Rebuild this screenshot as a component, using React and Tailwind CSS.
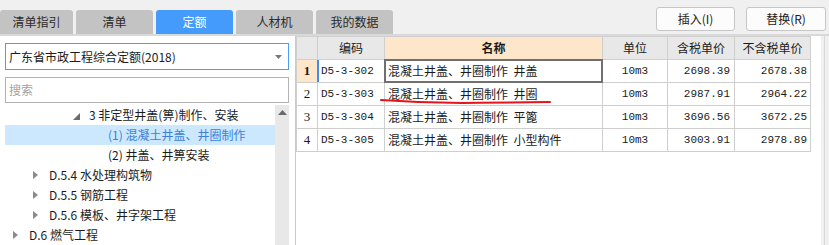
import React from 'react';

const cjk = '"Noto Sans CJK SC", "Noto Sans", sans-serif';
const mono = '"Liberation Mono", "Noto Sans CJK SC", monospace';

const tabs = [
  { label: '清单指引', w: 'w-[73px]' },
  { label: '清单', w: 'w-[77px]' },
  { label: '定额', w: 'w-[77px]', active: true },
  { label: '人材机', w: 'w-[77px]' },
  { label: '我的数据', w: 'w-[77px]' },
];

const rows = [
  { no: 1, code: 'D5-3-302', name: '混凝土井盖、井圈制作  井盖', unit: '10m3', tax: '2698.39', noTax: '2678.38' },
  { no: 2, code: 'D5-3-303', name: '混凝土井盖、井圈制作  井圈', unit: '10m3', tax: '2987.91', noTax: '2964.22' },
  { no: 3, code: 'D5-3-304', name: '混凝土井盖、井圈制作  平篦', unit: '10m3', tax: '3696.56', noTax: '3672.25' },
  { no: 4, code: 'D5-3-305', name: '混凝土井盖、井圈制作  小型构件', unit: '10m3', tax: '3003.91', noTax: '2978.89' },
];

const tree = [
  { text: '3 非定型井盖(箅)制作、安装', pad: 'pl-[68px]', icon: 'open' },
  { text: '(1) 混凝土井盖、井圈制作', pad: 'pl-[103px]', selected: true },
  { text: '(2) 井盖、井箅安装', pad: 'pl-[103px]' },
  { text: 'D.5.4 水处理构筑物', pad: 'pl-[28px]', icon: 'closed' },
  { text: 'D.5.5 钢筋工程', pad: 'pl-[28px]', icon: 'closed' },
  { text: 'D.5.6 模板、井字架工程', pad: 'pl-[28px]', icon: 'closed' },
  { text: 'D.6 燃气工程', pad: 'pl-[8px]', icon: 'closed' },
];

const TreeIcon = ({ type }) => {
  if (type === 'open') {
    return (
      <svg width="7" height="7" viewBox="0 0 7 7" className="mr-[9px] mt-[3px]">
        <path d="M7 0 L7 7 L0 7 Z" fill="#6b6b6b" />
      </svg>
    );
  }
  if (type === 'closed') {
    return (
      <svg width="5" height="8" viewBox="0 0 5 8" className="mr-[11px]">
        <path d="M0 0 L5 4 L0 8 Z" fill="#8a8a8a" />
      </svg>
    );
  }
  return null;
};

const Th = ({ children, className = '' }) => (
  <th className={`border border-[#cfcfcf] font-normal text-center ${className}`}>{children}</th>
);

export default function App() {
  return (
    <div
      className="relative w-[829px] h-[245px] bg-[#f0f0f0] flex flex-col overflow-hidden text-[12px] text-[#1b1b1b]"
      style={{ fontFamily: cjk }}
    >
      {/* top bar */}
      <div className="h-[34px] flex justify-between shrink-0">
        <div className="flex items-end gap-[3px]">
          {tabs.map((t) => (
            <div
              key={t.label}
              className={`${t.w} h-[24px] rounded-t-[3px] flex items-center justify-center text-[12px] ${
                t.active ? 'bg-[#449bfc] text-white' : 'bg-[#c3c3c3] text-[#2a2a2a]'
              }`}
            >
              {t.label}
            </div>
          ))}
        </div>
        <div className="flex gap-[11px] pt-[7px] pr-[3px]">
          <button className="w-[79px] h-[24px] bg-[#fcfcfc] border border-[#c6c6c6] rounded-[3px] text-[12px]">插入(I)</button>
          <button className="w-[80px] h-[24px] bg-[#fcfcfc] border border-[#c6c6c6] rounded-[3px] text-[12px]">替换(R)</button>
        </div>
      </div>
      <div className="h-[2px] bg-[#d9d9d9] shrink-0" />

      {/* body */}
      <div className="flex flex-1 min-h-0">
        {/* left panel */}
        <div className="w-[296px] bg-white flex flex-col pl-[5px] pr-[6px] pt-[7px] border-r border-[#cacaca]">
          <div className="h-[27px] border border-[#4b9cf4] flex items-center justify-between pl-[3px] pr-[6px] text-[12px]">
            <span>广东省市政工程综合定额(2018)</span>
            <svg width="7" height="4" viewBox="0 0 7 4">
              <path d="M0 0 L7 0 L3.5 4 Z" fill="#777" />
            </svg>
          </div>
          <div className="mt-[7px] h-[26px] border border-[#b3b3b3] flex items-center pl-[3px] text-[12px] text-[#a3a3a3]">
            搜索
          </div>
          <div className="flex flex-1 mt-[2px] min-h-0">
            <div className="flex-1 flex flex-col">
              {tree.map((n) => (
                <div
                  key={n.text}
                  className={`h-[20px] shrink-0 flex items-center ${n.pad} ${
                    n.selected ? 'bg-[#cce8ff] text-[#3d7fd6]' : ''
                  }`}
                >
                  <TreeIcon type={n.icon} />
                  <span className="whitespace-nowrap">{n.text}</span>
                </div>
              ))}
            </div>
            <div className="w-[14px] bg-[#e8e8e8] flex justify-center pt-[5px]">
              <svg width="9" height="5" viewBox="0 0 9 5">
                <path d="M0 5 L4.5 0 L9 5 Z" fill="#6a6a6a" />
              </svg>
            </div>
          </div>
        </div>

        {/* right panel */}
        <div className="flex-1 bg-white">
          <table className="table-fixed border-collapse" style={{ width: 514 }}>
            <colgroup>
              <col style={{ width: 21 }} />
              <col style={{ width: 67 }} />
              <col style={{ width: 218 }} />
              <col style={{ width: 65 }} />
              <col style={{ width: 67 }} />
              <col style={{ width: 76 }} />
            </colgroup>
            <thead>
              <tr className="h-[23px] bg-[#e8e8e8] text-[12px]">
                <Th />
                <Th>编码</Th>
                <Th className="bg-[#fde6c9] !font-bold">名称</Th>
                <Th>单位</Th>
                <Th>含税单价</Th>
                <Th>不含税单价</Th>
              </tr>
            </thead>
            <tbody>
              {rows.map((r) => {
                const first = r.no === 1;
                return (
                  <tr key={r.no} className="h-[23px]">
                    <td
                      className={`border border-[#cfcfcf] text-center text-[13px] ${
                        first ? 'bg-[#fde6c9] font-bold' : ''
                      }`}
                      style={{ fontFamily: '"Liberation Serif", serif' }}
                    >
                      {r.no}
                    </td>
                    <td className="relative border border-[#cfcfcf] pl-[3px] text-[11px]" style={{ fontFamily: mono }}>
                      {first && <div className="absolute left-[-1px] top-0 bottom-0 w-[2px] bg-[#3d8ef0]" />}
                      {r.code}
                    </td>
                    <td className="relative border border-[#cfcfcf] pl-[3px] pb-[2px] text-[12px] leading-[19px] whitespace-pre">
                      {first && <div className="absolute inset-[-1px] border-2 border-[#707070]" />}
                      {r.name}
                    </td>
                    <td className="border border-[#cfcfcf] text-center text-[11px]" style={{ fontFamily: mono }}>
                      {r.unit}
                    </td>
                    <td className="border border-[#cfcfcf] text-right pr-[4px] text-[11px]" style={{ fontFamily: mono }}>
                      {r.tax}
                    </td>
                    <td className="border border-[#cfcfcf] text-right pr-[3px] text-[11px]" style={{ fontFamily: mono }}>
                      {r.noTax}
                    </td>
                  </tr>
                );
              })}
            </tbody>
          </table>
        </div>
        <div className="w-[8px] flex">
          <div className="w-[3px] bg-[#f0f0f0]" />
          <div className="w-px bg-[#d8d8d8]" />
          <div className="flex-1 bg-[#f0f0f0]" />
        </div>
      </div>

      {/* hand-drawn red underline annotation */}
      <svg className="absolute left-[379px] top-[97px]" width="174" height="9" viewBox="0 0 174 9">
        <path d="M2 3 Q 50 6.5 100 5.8 T 171 5" stroke="#e5141b" strokeWidth="2" fill="none" strokeLinecap="round" />
      </svg>
    </div>
  );
}
